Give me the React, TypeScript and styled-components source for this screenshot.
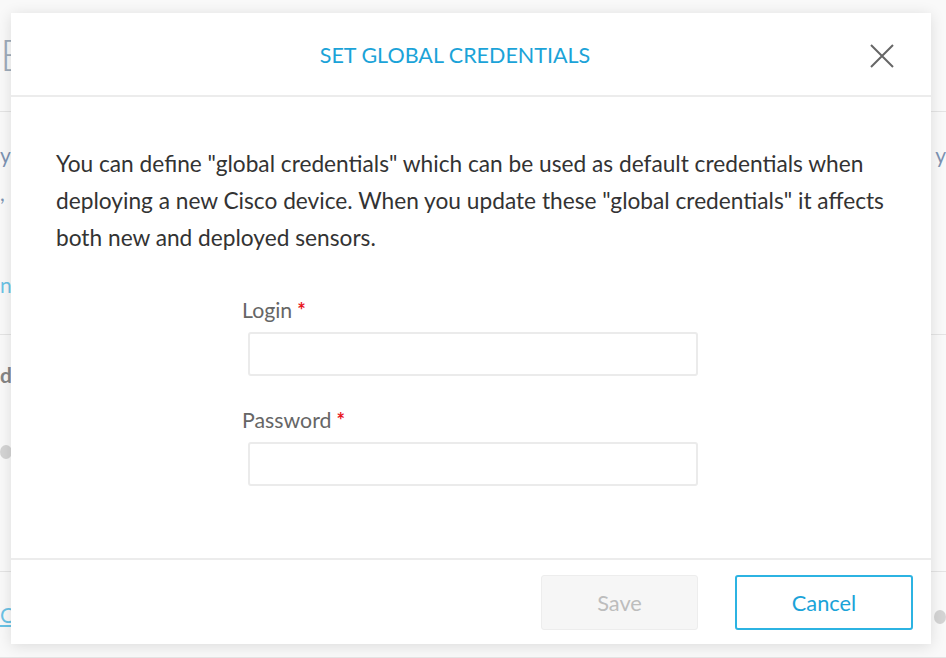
import React from "react";
import styled, { createGlobalStyle } from "styled-components";

const Global = createGlobalStyle`
  html, body { margin: 0; padding: 0; }
  body {
    width: 946px;
    height: 658px;
    overflow: hidden;
    background: #f4f4f4;
    font-family: Lato, "Open Sans", Arial, sans-serif;
  }
`;

const Page = styled.div`
  position: relative;
  width: 946px;
  height: 658px;
  overflow: hidden;
  background: #f6f6f6;
`;

const BgContent = styled.div`
  display: flex;
  flex-direction: column;
  color: #333;
`;

const BgTitle = styled.div`
  height: 112px;
  box-sizing: border-box;
  padding: 30px 0 0 0;
  font-size: 44px;
  line-height: 48px;
  font-weight: 300;
  color: #6b7f95;
  border-bottom: 1px solid #d6d6d6;
`;

const BgSection = styled.div<{ $h: number; $pt: number }>`
  height: ${(p) => p.$h}px;
  box-sizing: border-box;
  border-bottom: 1px solid #d6d6d6;
  padding-top: ${(p) => p.$pt}px;
  font-size: 21px;
  line-height: 38px;
  display: flex;
  justify-content: space-between;
`;

const BgCol = styled.div`
  display: flex;
  flex-direction: column;
  align-items: flex-start;
`;

const BgText = styled.span<{ $c?: string; $b?: boolean; $gap?: number; $u?: boolean }>`
  color: ${(p) => p.$c || "#444"};
  font-weight: ${(p) => (p.$b ? 700 : 400)};
  margin-top: ${(p) => p.$gap || 0}px;
  text-decoration: ${(p) => (p.$u ? "underline" : "none")};
`;

const BgDot = styled.span<{ $gap?: number }>`
  width: 12px;
  height: 14px;
  border-radius: 50%;
  background: #bdbdbd;
  margin-top: ${(p) => p.$gap || 0}px;
`;

const Backdrop = styled.div`
  position: absolute;
  inset: 0;
  background: rgba(255, 255, 255, 0.35);
`;

const Modal = styled.div`
  position: absolute;
  left: 11px;
  top: 13px;
  width: 920px;
  height: 631px;
  background: #fff;
  box-shadow: 0 2px 14px rgba(0, 0, 0, 0.12);
  display: flex;
  flex-direction: column;
`;

const Header = styled.div`
  height: 84px;
  box-sizing: border-box;
  border-bottom: 2px solid #ececec;
  display: flex;
  align-items: center;
  justify-content: center;
  padding-right: 32px;
  position: relative;
`;

const Title = styled.h2`
  margin: 0;
  font-size: 21.5px;
  font-weight: 400;
  color: #1ba3d8;
  padding-top: 2px;
`;

const Close = styled.button`
  position: absolute;
  right: 36px;
  top: 30px;
  width: 26px;
  height: 26px;
  padding: 0;
  border: none;
  background: transparent;
  cursor: pointer;
  display: flex;
`;

const Body = styled.div`
  flex: 1;
  padding: 48px 40px 0 45px;
  display: flex;
  flex-direction: column;
`;

const Intro = styled.p`
  margin: 0;
  font-size: 22.7px;
  line-height: 37px;
  color: #333;
`;

const Form = styled.div`
  margin: 42px 0 0 186px;
  width: 456px;
  display: flex;
  flex-direction: column;
  gap: 32px;
`;

const Field = styled.div`
  display: flex;
  flex-direction: column;
`;

const Label = styled.label`
  font-size: 21.3px;
  line-height: 24px;
  color: #666;
  margin-bottom: 10px;
`;

const Req = styled.span`
  color: #e8141c;
  margin-left: 5px;
  font-weight: 700;
  font-size: 20px;
`;

const Input = styled.input`
  margin-left: 6px;
  width: 450px;
  height: 44px;
  box-sizing: border-box;
  border: 2px solid #ebebeb;
  border-radius: 3px;
  background: #fff;
  font-family: inherit;
  font-size: 18px;
  padding: 0 12px;
  outline: none;
`;

const Footer = styled.div`
  height: 86px;
  box-sizing: border-box;
  border-top: 2px solid #ececec;
  display: flex;
  justify-content: flex-end;
  align-items: flex-start;
  padding: 15px 18px 0 0;
  gap: 37px;
`;

const Button = styled.button<{ $primary?: boolean }>`
  height: 55px;
  width: ${(p) => (p.$primary ? 178 : 157)}px;
  box-sizing: border-box;
  font-family: inherit;
  font-size: 21.8px;
  border-radius: 3px;
  cursor: ${(p) => (p.$primary ? "pointer" : "default")};
  background: ${(p) => (p.$primary ? "#fff" : "#f6f6f6")};
  color: ${(p) => (p.$primary ? "#1ba3d8" : "#bdbdbd")};
  border: ${(p) => (p.$primary ? "2px solid #2cb3e2" : "1px solid #ededed")};
`;

export default function App() {
  return (
    <>
      <Global />
      <Page>
        <BgContent>
          <BgTitle>Edit</BgTitle>
          <BgSection $h={223} $pt={24}>
            <BgCol>
              <BgText $c="#37598a">y</BgText>
              <BgText $c="#37598a">,</BgText>
              <BgText $c="#1ba3d8" $gap={54}>ns</BgText>
            </BgCol>
            <BgCol>
              <BgText $c="#37598a">y</BgText>
            </BgCol>
          </BgSection>
          <BgSection $h={237} $pt={21}>
            <BgCol>
              <BgText $b>d</BgText>
              <BgDot $gap={51} />
            </BgCol>
          </BgSection>
          <BgSection $h={86} $pt={24}>
            <BgCol>
              <BgText $c="#1ba3d8" $u>O</BgText>
            </BgCol>
            <BgCol>
              <BgDot $gap={14} />
            </BgCol>
          </BgSection>
        </BgContent>
        <Backdrop />
        <Modal role="dialog">
          <Header>
            <Title>SET GLOBAL CREDENTIALS</Title>
            <Close aria-label="Close">
              <svg width="26" height="26" viewBox="0 0 26 26">
                <path d="M2 2 L24 24 M24 2 L2 24" stroke="#666" strokeWidth="2" fill="none" />
              </svg>
            </Close>
          </Header>
          <Body>
            <Intro>
              You can define "global credentials" which can be used as default credentials when
              deploying a new Cisco device. When you update these "global credentials" it affects
              both new and deployed sensors.
            </Intro>
            <Form>
              <Field>
                <Label>
                  Login<Req>*</Req>
                </Label>
                <Input type="text" />
              </Field>
              <Field>
                <Label>
                  Password<Req>*</Req>
                </Label>
                <Input type="password" />
              </Field>
            </Form>
          </Body>
          <Footer>
            <Button disabled>Save</Button>
            <Button $primary>Cancel</Button>
          </Footer>
        </Modal>
      </Page>
    </>
  );
}
